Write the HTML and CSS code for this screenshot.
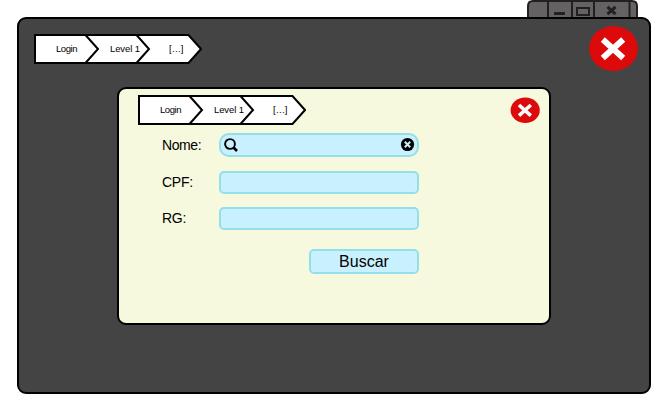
FILE: index.html
```html
<!DOCTYPE html>
<html lang="pt">
<head>
<meta charset="utf-8">
<title>Buscar</title>
<link rel="stylesheet" href="styles.css">
</head>
<body>
<svg class="controls" viewBox="0 0 111 17">
  <path class="controls-frame" d="M1 18V6Q1 1 6 1H105Q110 1 110 6V18M21 1V17M45 1V17M67 1V17M102.500 1V17"/>
  <path class="minimize" d="M27 13.500H38"/>
  <rect class="maximize" x="50" y="8" width="11" height="6"/>
  <path class="shut" d="M80.500 6.800L88.500 14.200M88.500 6.800L80.500 14.200"/>
</svg>
<main class="window">
  <header class="window-head">
    <svg class="crumbs" viewBox="0 0 168 30">
      <path d="M1 1H154.500L167 15L154.500 29H1ZM51.500 1L64 15L51.500 29M102.500 1L115 15L102.500 29"/>
      <text x="22" y="18" textLength="21.500">Login</text>
      <text x="76" y="18" textLength="30">Level 1</text>
      <text x="135" y="18" textLength="14.500">[...]</text>
    </svg>
    <svg class="close-large" viewBox="0 0 49 46">
      <ellipse cx="24.500" cy="22.500" rx="24.500" ry="22.500"/>
      <path d="M13.800 13.500L34.200 32M34.200 13.500L13.800 32"/>
    </svg>
  </header>
  <section class="dialog">
    <header class="dialog-head">
      <svg class="crumbs" viewBox="0 0 168 30">
        <path d="M1 1H154.500L167 15L154.500 29H1ZM51.500 1L64 15L51.500 29M102.500 1L115 15L102.500 29"/>
        <text x="22" y="18" textLength="21.500">Login</text>
        <text x="76" y="18" textLength="30">Level 1</text>
        <text x="135" y="18" textLength="14.500">[...]</text>
      </svg>
      <svg class="close-small" viewBox="0 0 30 26">
        <ellipse cx="15.200" cy="13.200" rx="14.600" ry="12.800"/>
        <path d="M9 8L20.800 18.600M20.800 8L9 18.600"/>
      </svg>
    </header>
    <form class="form">
      <div class="row">
        <span class="label">Nome:</span>
        <div class="field search">
          <svg class="icon" viewBox="0 0 14 14"><circle class="lens" cx="6" cy="6" r="4.900"/><path class="handle" d="M9.500 9.500L13 13"/></svg>
          <svg class="icon" viewBox="0 0 14 14"><circle cx="7.500" cy="6.500" r="6.600"/><path class="clear" d="M4.800 3.800L10.200 9.200M10.200 3.800L4.800 9.200"/></svg>
        </div>
      </div>
      <div class="row"><span class="label raised">CPF:</span><div class="field"></div></div>
      <div class="row"><span class="label raised">RG:</span><div class="field"></div></div>
      <button class="submit" type="button"><span class="submit-text">Buscar</span></button>
    </form>
  </section>
</main>
</body>
</html>
```
FILE: styles.css
```css
* { box-sizing: border-box; }
body {
  margin: 0;
  height: 407px;
  overflow: hidden;
  background: #fff;
  color: #000;
  font-family: "Liberation Sans", Arial, sans-serif;
}
svg { display: block; flex: none; }
.controls { width: 111px; height: 17px; margin-left: 527px; }
.controls path, .controls rect { fill: none; stroke: #222021; stroke-width: 2; }
.controls .controls-frame { fill: #646263; }
.controls .minimize { stroke-width: 3; }
.controls .maximize { width: 12px; height: 7px; }
.controls .shut { stroke-width: 3; }
.window {
  width: 634px;
  height: 377px;
  margin-left: 17px;
  background: #444;
  border: 2px solid #000;
  border-radius: 9px;
}
.window-head {
  display: flex;
  justify-content: space-between;
  align-items: flex-start;
  height: 53px;
  padding: 7px 11px 0 15px;
}
.crumbs { width: 168px; height: 30px; }
.window-head .crumbs { margin-top: 8px; }
.crumbs path { fill: #fff; stroke: #000; stroke-width: 2; }
.crumbs text { font-size: 9.5px; }
.close-large { width: 49px; height: 46px; }
.close-small { width: 30px; height: 26px; margin-top: 2px; }
.close-large ellipse, .close-small ellipse { fill: #dc0a0a; }
.close-large path { stroke: #fff; stroke-width: 6; }
.close-small path { stroke: #fff; stroke-width: 3.6; }
.dialog {
  width: 434px;
  height: 238px;
  margin: 15px 0 0 98px;
  background: #f7f9df;
  border: 2px solid #000;
  border-radius: 9px;
}
.dialog-head {
  display: flex;
  justify-content: space-between;
  align-items: flex-start;
  padding: 6px 9px 0 19px;
}
.form {
  display: flex;
  flex-direction: column;
  gap: 13px;
  width: 300px;
  padding: 8px 0 0 43px;
}
.row { display: flex; align-items: center; }
.row:first-child { margin-bottom: 1px; }
.label { width: 57px; font-size: 14px; line-height: 20px; letter-spacing: -0.4px; }
.raised { padding-bottom: 2px; letter-spacing: -0.25px; }
.field {
  flex: 1;
  height: 23px;
  background: #c9f0ff;
  border: 2px solid #93dfec;
  border-radius: 5px;
}
.search {
  display: flex;
  align-items: center;
  justify-content: space-between;
  height: 24px;
  padding: 0 3px 1px;
  border-radius: 10px;
}
.icon { width: 14px; height: 14px; overflow: visible; }
.lens { fill: none; stroke: #000; stroke-width: 1.9; }
.handle { stroke: #000; stroke-width: 2.6; }
.clear { stroke: #c9f0ff; stroke-width: 2; }
.submit {
  align-self: flex-end;
  width: 110px;
  height: 25px;
  margin-top: 6px;
  padding: 0;
  background: #c9f0ff;
  border: 2px solid #93dfec;
  border-radius: 5px;
  color: #000;
  font: 16px/20px "Liberation Sans", Arial, sans-serif;
}
```
